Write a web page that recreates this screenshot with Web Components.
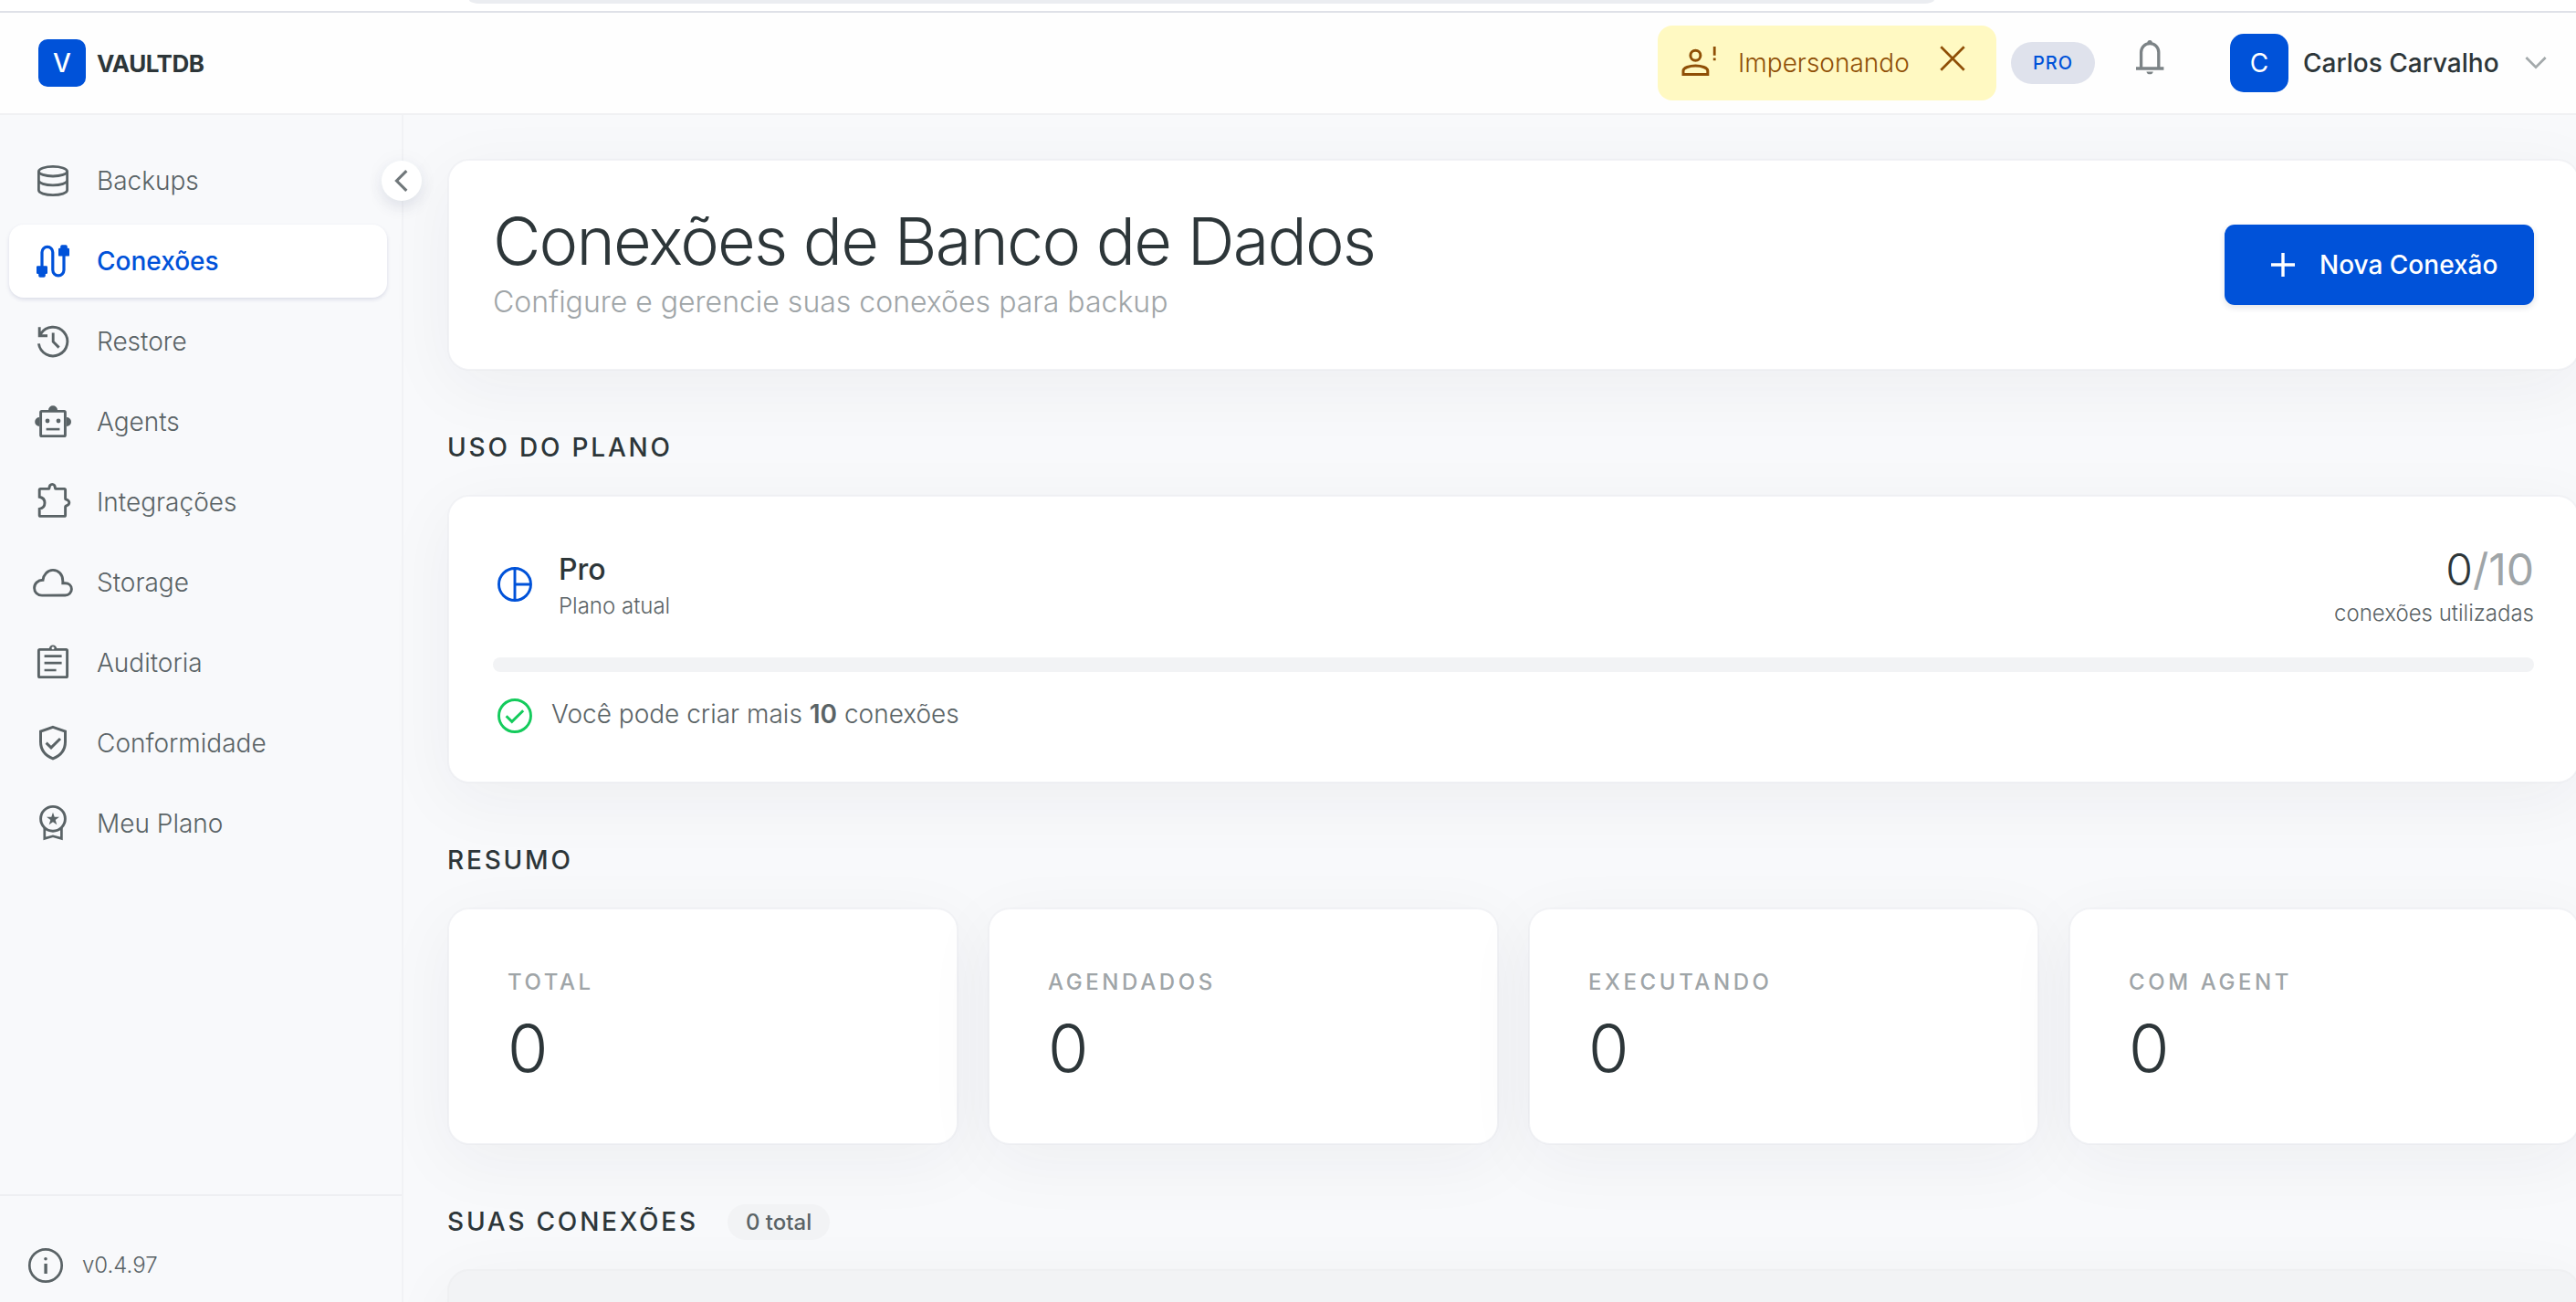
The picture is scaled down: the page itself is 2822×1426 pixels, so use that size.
<!DOCTYPE html>
<html lang="pt-BR">
<head>
<meta charset="utf-8">
<title>VaultDB</title>
<style>
html,body{margin:0;height:1426px;overflow:hidden;background:#f8f9fb;font-family:Inter,"Liberation Sans",sans-serif;color:#2d3639}
</style>
</head>
<body>
<vault-app></vault-app>
<script>
const icons = {
  backups:'<g fill="none" stroke="currentColor" stroke-width="1.400"><ellipse cx="12" cy="6.850" rx="7.800" ry="2.650"/><path d="M4.200 6.850v10.300c0 1.500 3.500 2.650 7.800 2.650s7.800-1.150 7.800-2.650V6.850M4.200 11.800c0 1.500 3.500 2.600 7.800 2.600s7.800-1.100 7.800-2.600"/></g>',
  conexoes:'<g fill="none" stroke="currentColor" stroke-width="1.6"><path d="M6 16V7.100a2.950 2.950 0 0 1 5.900 0v9.800a3.050 3.050 0 0 0 6.100 0V7"/></g><path d="M3.600 14.600h4.800q.6 0 .6.600v3.200q0 .6-.6.600h-.5v1q0 .9-.9.900H5q-.9 0-.9-.9v-1h-.5q-.6 0-.6-.6v-3.200q0-.6.600-.6zM15.600 9.300h4.800q.6 0 .6-.6V5.500q0-.6-.6-.6h-.5V4q0-.9-.9-.9h-2q-.9 0-.9.900v.900h-.5q-.6 0-.6.600v3.200q0 .6.600.6z"/>',
  restore:'<g fill="none" stroke="currentColor" stroke-width="1.450"><path d="M4.200 13.200a7.900 7.900 0 1 0 1.200-5.500L4.600 8.900M4.600 4.100v4.800H9"/><path d="M12.100 7.300v4.800l3.200 3.200"/></g>',
  agents:'<g fill="none" stroke="currentColor" stroke-width="1.450"><rect x="5.300" y="6.200" width="13.400" height="13.600" rx=".6"/><path d="M8.300 16.050h7.400" stroke-width="1.300"/></g><path d="M9.500 5.600a2.500 2.500 0 0 1 5 0zM4.600 9.500a2.450 2.450 0 0 0 0 5zM19.500 9.500a2.450 2.450 0 0 1 0 5z"/><circle cx="9" cy="11.500" r="1.200"/><circle cx="15" cy="11.500" r="1.200"/>',
  integracoes:'<path fill="none" stroke="currentColor" stroke-width="1.450" d="M5.200 4.700h4.500q.3 0 .3-.5c0-1.200.7-2 1.600-2s1.600.8 1.600 2q0 .5.300.5h4.700q.6 0 .6.600v4.800c0 .3.200.4.500.5.900.300 1.600.900 1.600 1.700s-.7 1.400-1.600 1.700c-.3.100-.5.200-.5.500v4.600q0 .6-.6.600h-13q-.6 0-.6-.6v-3.400c1.700-.3 2.900-1.600 2.900-3.300s-1.200-3-2.900-3.300V5.300q0-.6.600-.6z"/>',
  storage:'<path fill="none" stroke="currentColor" stroke-width="1.450" d="M6 19.050c-2.500 0-4.200-1.800-4.200-4.100 0-2.400 1.900-4.200 4.700-4.300C6.800 7.700 9 5.200 12 5.200c3.200 0 5.400 2.500 5.400 5.900v1.300h1.300c2 0 3.500 1.300 3.500 3.200s-1.500 3.400-3.500 3.400z"/>',
  auditoria:'<g fill="none" stroke="currentColor" stroke-width="1.450"><rect x="4.200" y="4.700" width="15.600" height="15.100" rx=".6"/><path d="M7.300 8.300h9.500M7.300 12.100h9.500M7.300 16h6.500" stroke-width="1.350"/></g><path d="M9.850 4.400a2.150 2.150 0 0 1 4.300 0z"/><circle cx="12" cy="3.900" r=".75" fill="#f8f9fb"/>',
  conformidade:'<path fill="none" stroke="currentColor" stroke-width="1.500" d="M12 3.200l6.750 2.300v5.600c0 4.600-2.600 7.700-6.750 9.300-4.150-1.600-6.750-4.700-6.750-9.300V5.500zM8.300 11.800l2.700 2.600 5-4.900"/>',
  meuplano:'<g fill="none" stroke="currentColor" stroke-width="1.450"><circle cx="12" cy="9.400" r="6.700"/><path d="M7.400 14.500v5.700l4.600-1.300 4.700 1.300v-5.700" stroke-width="1.350"/></g><path d="M12 5.900l.85 2.500h2.650l-2.150 1.600.8 2.600L12 11.100l-2.150 1.500.8-2.600L8.500 8.400h2.650z"/>',
  info:'<circle cx="12" cy="12" r="8.850" fill="none" stroke="currentColor" stroke-width="1.350"/><path d="M11.200 11h1.700v5.500h-1.700z"/><circle cx="12" cy="8.400" r=".9"/>',
  left:'<path fill="none" stroke="currentColor" stroke-width="1.900" d="M15.200 5.500L8.700 12l6.500 6.500"/>',
  down:'<path fill="none" stroke="currentColor" stroke-width="2.200" d="M3.500 7.200L12 15.700l8.500-8.500"/>',
  user:'<g fill="none" stroke="currentColor" stroke-width="1.500"><circle cx="9.700" cy="7.900" r="2.750"/><path d="M3 18.200v-1.900c0-1.700 3.500-2.800 6.700-2.800s6.700 1.100 6.700 2.800v1.900z"/></g><path d="M19.400 3h1.400v4.900h-1.400zM19.400 9.300h1.400v1.300h-1.400z"/>',
  close:'<path fill="none" stroke="currentColor" stroke-width="1.300" d="M5.900 5.900l12.200 12.200M18.100 5.900L5.900 18.100"/>',
  bell:'<path fill="none" stroke="currentColor" stroke-width="1.650" d="M7.300 18.200V9.600a4.800 4.800 0 0 1 9.600 0v8.600M4.500 18.500h15.200"/><path d="M10.700 5.100V4.300a1.300 1.300 0 0 1 2.700 0v.8zM10.200 20.200h3.700a1.900 1.900 0 0 1-3.700 0z"/>',
  plus:'<path fill="none" stroke="currentColor" stroke-width="1.700" d="M12 5.500v13M5.500 12h13"/>',
  pie:'<path fill="none" stroke="currentColor" stroke-width="1.450" d="M12 3.250a8.750 8.750 0 1 0 0 17.500 8.750 8.750 0 0 0 0-17.500zM12 3.200v17.600M12 12h8.800"/>',
  check:'<path fill="none" stroke="currentColor" stroke-width="1.450" d="M12 3.250a8.750 8.750 0 1 0 0 17.500 8.750 8.750 0 0 0 0-17.500zM7.300 12.100l3.100 3.100 6.200-6.100"/>'
};
function define(name, html){
  customElements.define(name, class extends HTMLElement{
    constructor(){
      super();
      this.attachShadow({mode:'open'}).innerHTML = typeof html === 'function' ? html(this) : html;
    }
  });
}
define('v-icon', el => `<style>:host{display:block;flex:none;width:48px;height:48px}svg{display:block;width:100%;height:100%;fill:currentColor}</style><svg viewBox="0 0 24 24">${icons[el.getAttribute('name')]}</svg>`);

define('nav-item', `<style>
:host{display:flex;align-items:center;height:80px;margin:0 16px 8px 10px;padding-left:24px;gap:24px;border-radius:16px;font-size:28px;font-weight:300;color:#5a6366}
:host([active]){background:#fff;color:#0052d9;font-weight:500;box-shadow:0 2px 4px rgba(45,50,110,.14)}
</style><slot name="icon"></slot><span><slot></slot></span>`);

define('side-bar', `<style>
:host{display:flex;flex-direction:column;width:440px;flex:none;border-right:2px solid #f1f2f5;position:relative}
nav{padding-top:32px;flex:1}
footer{height:118px;padding:54px 0 0 26px;border-top:2px solid #eeeff2;box-sizing:border-box;display:flex;align-items:flex-start;gap:16px;color:#5a6366;font-size:24px;font-weight:300;line-height:44px}
footer v-icon{margin-top:-2px}
button{position:absolute;left:418px;top:50px;width:44px;height:44px;border:0;border-radius:50%;background:#fff;padding:0;display:grid;place-items:center;color:#71787b;box-shadow:0 8px 16px rgba(60,65,110,.1),0 0 24px rgba(60,65,110,.04);z-index:2}
button v-icon{width:40px;height:40px}
</style>
<nav>
<nav-item><v-icon slot="icon" name="backups"></v-icon>Backups</nav-item>
<nav-item active><v-icon slot="icon" name="conexoes"></v-icon>Conexões</nav-item>
<nav-item><v-icon slot="icon" name="restore"></v-icon>Restore</nav-item>
<nav-item><v-icon slot="icon" name="agents"></v-icon>Agents</nav-item>
<nav-item><v-icon slot="icon" name="integracoes"></v-icon>Integrações</nav-item>
<nav-item><v-icon slot="icon" name="storage"></v-icon>Storage</nav-item>
<nav-item><v-icon slot="icon" name="auditoria"></v-icon>Auditoria</nav-item>
<nav-item><v-icon slot="icon" name="conformidade"></v-icon>Conformidade</nav-item>
<nav-item><v-icon slot="icon" name="meuplano"></v-icon>Meu Plano</nav-item>
</nav>
<footer><v-icon name="info"></v-icon><span>v0.4.97</span></footer>
<button><v-icon name="left"></v-icon></button>`);

define('browser-edge', `<style>
:host{display:flex;height:14px;box-sizing:border-box;border-bottom:2px solid #dfe1e8;background:#fff}
i{display:block;margin-left:514px;width:1605px;height:4px;background:#ebedf1;border-radius:0 0 12px 12px/0 0 4px 4px}
</style><i></i>`);

define('top-bar', `<style>
:host{display:flex;align-items:center;height:112px;box-sizing:border-box;border-bottom:2px solid #f0f1f3;background:#fefefe;padding:0 29px 0 42px}
.logo{width:52px;height:52px;border-radius:10px;background:#0052d9;color:#fff;font-size:28px;font-weight:500;display:grid;place-items:center}
b{font-size:26px;font-weight:700;margin-left:12px;flex:1;letter-spacing:-.52px}
.imp{display:flex;align-items:center;width:371px;height:82px;box-sizing:border-box;padding-left:22px;border-radius:16px;background:#fff9c2;color:#8f4f06;font-size:28px;font-weight:300}
.imp span{margin-left:18px;flex:1}
.imp .x{width:50px;height:50px;margin:0 23px 10px 0}
.pro{margin-left:16px;width:92px;height:46px;border-radius:23px;background:#dfe2ec;color:#0052d9;font-size:20px;font-weight:500;letter-spacing:1px;display:grid;place-items:center}
.bell{margin:0 0 14px 36px;color:#7c8386}
.av{margin-left:64px;width:64px;height:64px;border-radius:15px;background:#0052d9;color:#fff;font-size:28px;display:grid;place-items:center}
.name{font-size:28px;font-weight:500;margin-left:16px;width:240px;white-space:nowrap}
.down{width:30px;height:30px;color:#a3a9ab}
</style>
<div class="logo">V</div><b>VAULTDB</b>
<div class="imp"><v-icon name="user"></v-icon><span>Impersonando</span><v-icon class="x" name="close"></v-icon></div>
<div class="pro">PRO</div><v-icon class="bell" name="bell"></v-icon>
<div class="av">C</div><div class="name">Carlos Carvalho</div><v-icon class="down" name="down"></v-icon>`);

define('panel-card', `<style>
:host{display:block;box-sizing:border-box;border:2px solid rgba(60,70,80,.03);background:#fff;background-clip:padding-box;border-radius:24px;box-shadow:0 18px 76px rgba(30,40,50,.05)}
</style><slot></slot>`);

define('section-title', `<style>
:host{display:flex;align-items:center;height:40px;font-size:28px;font-weight:500;letter-spacing:2.800px;white-space:nowrap;position:relative}
</style><slot></slot>`);

define('stat-card', el => `<style>
:host{display:block}
panel-card{height:260px;padding:64px 64px 0}
.l{font-size:24px;line-height:32px;font-weight:500;letter-spacing:3.600px;color:#9fa5a8}
.n{font-size:72px;line-height:80px;font-weight:300;margin-top:16px}
</style><panel-card><div class="l">${el.getAttribute('label')}</div><div class="n"><slot></slot></div></panel-card>`);

define('page-head', `<style>
:host{display:block}
panel-card{height:232px;padding:48px;display:flex;align-items:center;justify-content:space-between}
h1{margin:0;font-size:72px;line-height:80px;font-weight:300;letter-spacing:-1.800px}
p{margin:4px 0 3px;font-size:32px;line-height:45px;font-weight:300;color:#9fa5a8}
button{width:339px;height:88px;border:0;border-radius:11px;background:#0052d9;color:#fff;font:500 28px Inter,sans-serif;display:flex;align-items:center;padding:0 0 0 40px;gap:16px;box-shadow:0 3px 7px rgba(20,30,60,.12)}
</style><panel-card><div><h1>Conexões de Banco de Dados</h1><p>Configure e gerencie suas conexões para backup</p></div>
<button><v-icon name="plus"></v-icon>Nova Conexão</button></panel-card>`);

define('plan-usage', `<style>
:host{display:block}
panel-card{height:316px;padding:48px;display:flex;flex-direction:column}
.row{display:flex;align-items:center;height:96px}
.pie{color:#0052d9}
.plan{margin-left:24px;padding-top:3px;flex:1}
.t{font-size:32px;line-height:44px;font-weight:500}
.s{font-size:24px;line-height:36px;font-weight:300;color:#5a6366}
.use{text-align:right}
.use .s{line-height:33px}
.n{font-size:48px;line-height:63px;font-weight:300}
.n span{font-weight:400;color:#9fa5a8}
.bar{height:16px;border-radius:8px;background:#f2f3f5;margin-top:32px}
.ok{display:flex;align-items:center;gap:16px;margin-top:24px;font-size:28px;font-weight:300;color:#5a6366}
.ok v-icon{color:#14cb5c}
.ok span{margin-bottom:4px}
b{font-weight:600}
</style><panel-card><div class="row"><v-icon class="pie" name="pie"></v-icon><div class="plan"><div class="t">Pro</div><div class="s">Plano atual</div></div>
<div class="use"><div class="n">0<span>/10</span></div><div class="s">conexões utilizadas</div></div></div>
<div class="bar"></div><div class="ok"><v-icon name="check"></v-icon><span>Você pode criar mais <b>10</b> conexões</span></div></panel-card>`);

define('vault-app', `<style>
:host{display:flex;flex-direction:column;height:1426px;overflow:hidden}
.body{display:flex;flex:1;min-height:0}
main{flex:none;width:2336px;padding:48px 0 0 48px}
section-title{margin:64px 0 32px}
.stats{display:grid;grid-template-columns:repeat(4,1fr);gap:32px}
.chip{margin-left:32px;height:39px;padding:0 20px;border-radius:20px;background:#f2f3f5;color:#5a6366;font-size:24px;letter-spacing:0;display:flex;align-items:center}
.list{height:96px;background:#f2f3f5;border-color:rgba(60,70,80,.015);padding:33px 46px 0;font-size:24px;line-height:32px;font-weight:500;letter-spacing:1.600px;color:#9fa5a8}
</style>
<browser-edge></browser-edge><top-bar></top-bar>
<div class="body"><side-bar></side-bar><main>
<page-head></page-head>
<section-title>USO DO PLANO</section-title>
<plan-usage></plan-usage>
<section-title>RESUMO</section-title>
<div class="stats"><stat-card label="TOTAL">0</stat-card><stat-card label="AGENDADOS">0</stat-card><stat-card label="EXECUTANDO">0</stat-card><stat-card label="COM AGENT">0</stat-card></div>
<section-title>SUAS CONEXÕES<span class="chip">0 total</span></section-title>
<panel-card class="list">CONEXÃO</panel-card>
</main></div>`);
</script>
</body>
</html>
